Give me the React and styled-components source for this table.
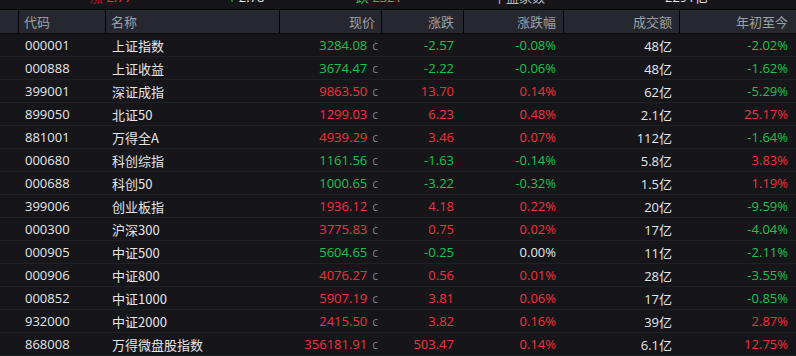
import React from "react";
import styled, { createGlobalStyle } from "styled-components";

const GlobalStyle = createGlobalStyle`
  html, body { margin: 0; padding: 0; background: #15151a; }
  body { font-family: "Open Sans", "Noto Sans CJK SC", sans-serif; }
`;

const COLS = "18px 87px 174px 102px 82px 100px 116px 117px";

const GREEN = "#1fc04e";
const RED = "#f5303b";
const WHITE = "#e6e6e8";

const Page = styled.div`
  width: 796px;
  height: 356px;
  overflow: hidden;
  background: #15151a;
`;

const TopStrip = styled.div`
  display: grid;
  grid-template-columns: 90px 128px 138px 137px 172px 131px;
  height: 9px;
  overflow: hidden;
  border-bottom: 1px solid #050507;
  font-size: 13px;
  line-height: 13px;
`;

const StripCell = styled.div`
  margin-top: -9px;
  color: ${(p) => p.$color};
  padding-left: ${(p) => p.$pl || 0}px;
  white-space: nowrap;
`;

const StripMark = styled.span`
  color: ${(p) => p.$color};
`;

const Header = styled.div`
  display: grid;
  grid-template-columns: ${COLS};
  height: 24px;
  background: #26272f;
  border-bottom: 1px solid #0c0c10;
  box-sizing: border-box;
`;

const HeadCell = styled.div`
  display: flex;
  align-items: center;
  justify-content: ${(p) => (p.$right ? "flex-end" : "flex-start")};
  padding: 0 ${(p) => p.$pr || 0}px 0 ${(p) => p.$pl || 0}px;
  border-left: ${(p) => (p.$first ? "none" : "1px solid #050507")};
  color: #9ba1a9;
  font-size: 13px;
  font-family: "Noto Sans CJK SC", sans-serif;
  white-space: nowrap;
`;

const Row = styled.div`
  display: grid;
  grid-template-columns: ${COLS};
  height: 23px;
  box-sizing: border-box;
  border-bottom: 1px solid #202027;
  font-size: 13px;
`;

const Cell = styled.div`
  display: flex;
  align-items: center;
  justify-content: ${(p) => (p.$right ? "flex-end" : "flex-start")};
  padding: 0 ${(p) => p.$pr || 0}px 0 ${(p) => p.$pl || 0}px;
  color: ${(p) => p.$color || WHITE};
  white-space: nowrap;
  font-family: "Open Sans", "Noto Sans CJK SC", sans-serif;
`;

const NameText = styled.span`
  font-family: "Noto Sans CJK SC", sans-serif;
  font-size: 13px;
`;

const Mark = styled.span`
  color: #7d7f85;
  font-size: 12px;
  margin-left: 5px;
`;

const rows = [
  ["000001", "上证指数", "3284.08", "-2.57", "-0.08%", "48亿", "-2.02%"],
  ["000888", "上证收益", "3674.47", "-2.22", "-0.06%", "48亿", "-1.62%"],
  ["399001", "深证成指", "9863.50", "13.70", "0.14%", "62亿", "-5.29%"],
  ["899050", "北证50", "1299.03", "6.23", "0.48%", "2.1亿", "25.17%"],
  ["881001", "万得全A", "4939.29", "3.46", "0.07%", "112亿", "-1.64%"],
  ["000680", "科创综指", "1161.56", "-1.63", "-0.14%", "5.8亿", "3.83%"],
  ["000688", "科创50", "1000.65", "-3.22", "-0.32%", "1.5亿", "1.19%"],
  ["399006", "创业板指", "1936.12", "4.18", "0.22%", "20亿", "-9.59%"],
  ["000300", "沪深300", "3775.83", "0.75", "0.02%", "17亿", "-4.04%"],
  ["000905", "中证500", "5604.65", "-0.25", "0.00%", "11亿", "-2.11%"],
  ["000906", "中证800", "4076.27", "0.56", "0.01%", "28亿", "-3.55%"],
  ["000852", "中证1000", "5907.19", "3.81", "0.06%", "17亿", "-0.85%"],
  ["932000", "中证2000", "2415.50", "3.82", "0.16%", "39亿", "2.87%"],
  ["868008", "万得微盘股指数", "356181.91", "503.47", "0.14%", "6.1亿", "12.75%"],
];

const colorOf = (v) => {
  if (v.startsWith("-")) return GREEN;
  if (/^0\.00/.test(v)) return WHITE;
  return RED;
};

export default function App() {
  return (
    <Page>
      <GlobalStyle />
      <TopStrip>
        <div />
        <StripCell $color={RED}>
          <StripMark $color="#a02028">涨</StripMark> 2.77
        </StripCell>
        <StripCell $color={WHITE} $pl={10}>
          <StripMark $color={GREEN}>1</StripMark> 2.78
        </StripCell>
        <StripCell $color={GREEN}>
          跌 2321
        </StripCell>
        <StripCell $color="#b8b8bc">平盘家数</StripCell>
        <StripCell $color={WHITE}>2291亿</StripCell>
      </TopStrip>
      <Header>
        <HeadCell $first />
        <HeadCell $pl={5}>代码</HeadCell>
        <HeadCell $pl={5}>名称</HeadCell>
        <HeadCell $right $pr={6}>现价</HeadCell>
        <HeadCell $right $pr={9}>涨跌</HeadCell>
        <HeadCell $right $pr={7}>涨跌幅</HeadCell>
        <HeadCell $right $pr={7}>成交额</HeadCell>
        <HeadCell $right $pr={8}>年初至今</HeadCell>
      </Header>
      {rows.map((r) => {
        const c = colorOf(r[3]);
        return (
          <Row key={r[0]}>
            <Cell />
            <Cell $pl={7}>{r[0]}</Cell>
            <Cell $pl={7}>
              <NameText>{r[1]}</NameText>
            </Cell>
            <Cell $right $pr={3} $color={c}>
              {r[2]}
              <Mark>c</Mark>
            </Cell>
            <Cell $right $pr={9} $color={c}>
              {r[3]}
            </Cell>
            <Cell $right $pr={7} $color={colorOf(r[4])}>
              {r[4]}
            </Cell>
            <Cell $right $pr={7}>{r[5]}</Cell>
            <Cell $right $pr={8} $color={colorOf(r[6])}>
              {r[6]}
            </Cell>
          </Row>
        );
      })}
    </Page>
  );
}
